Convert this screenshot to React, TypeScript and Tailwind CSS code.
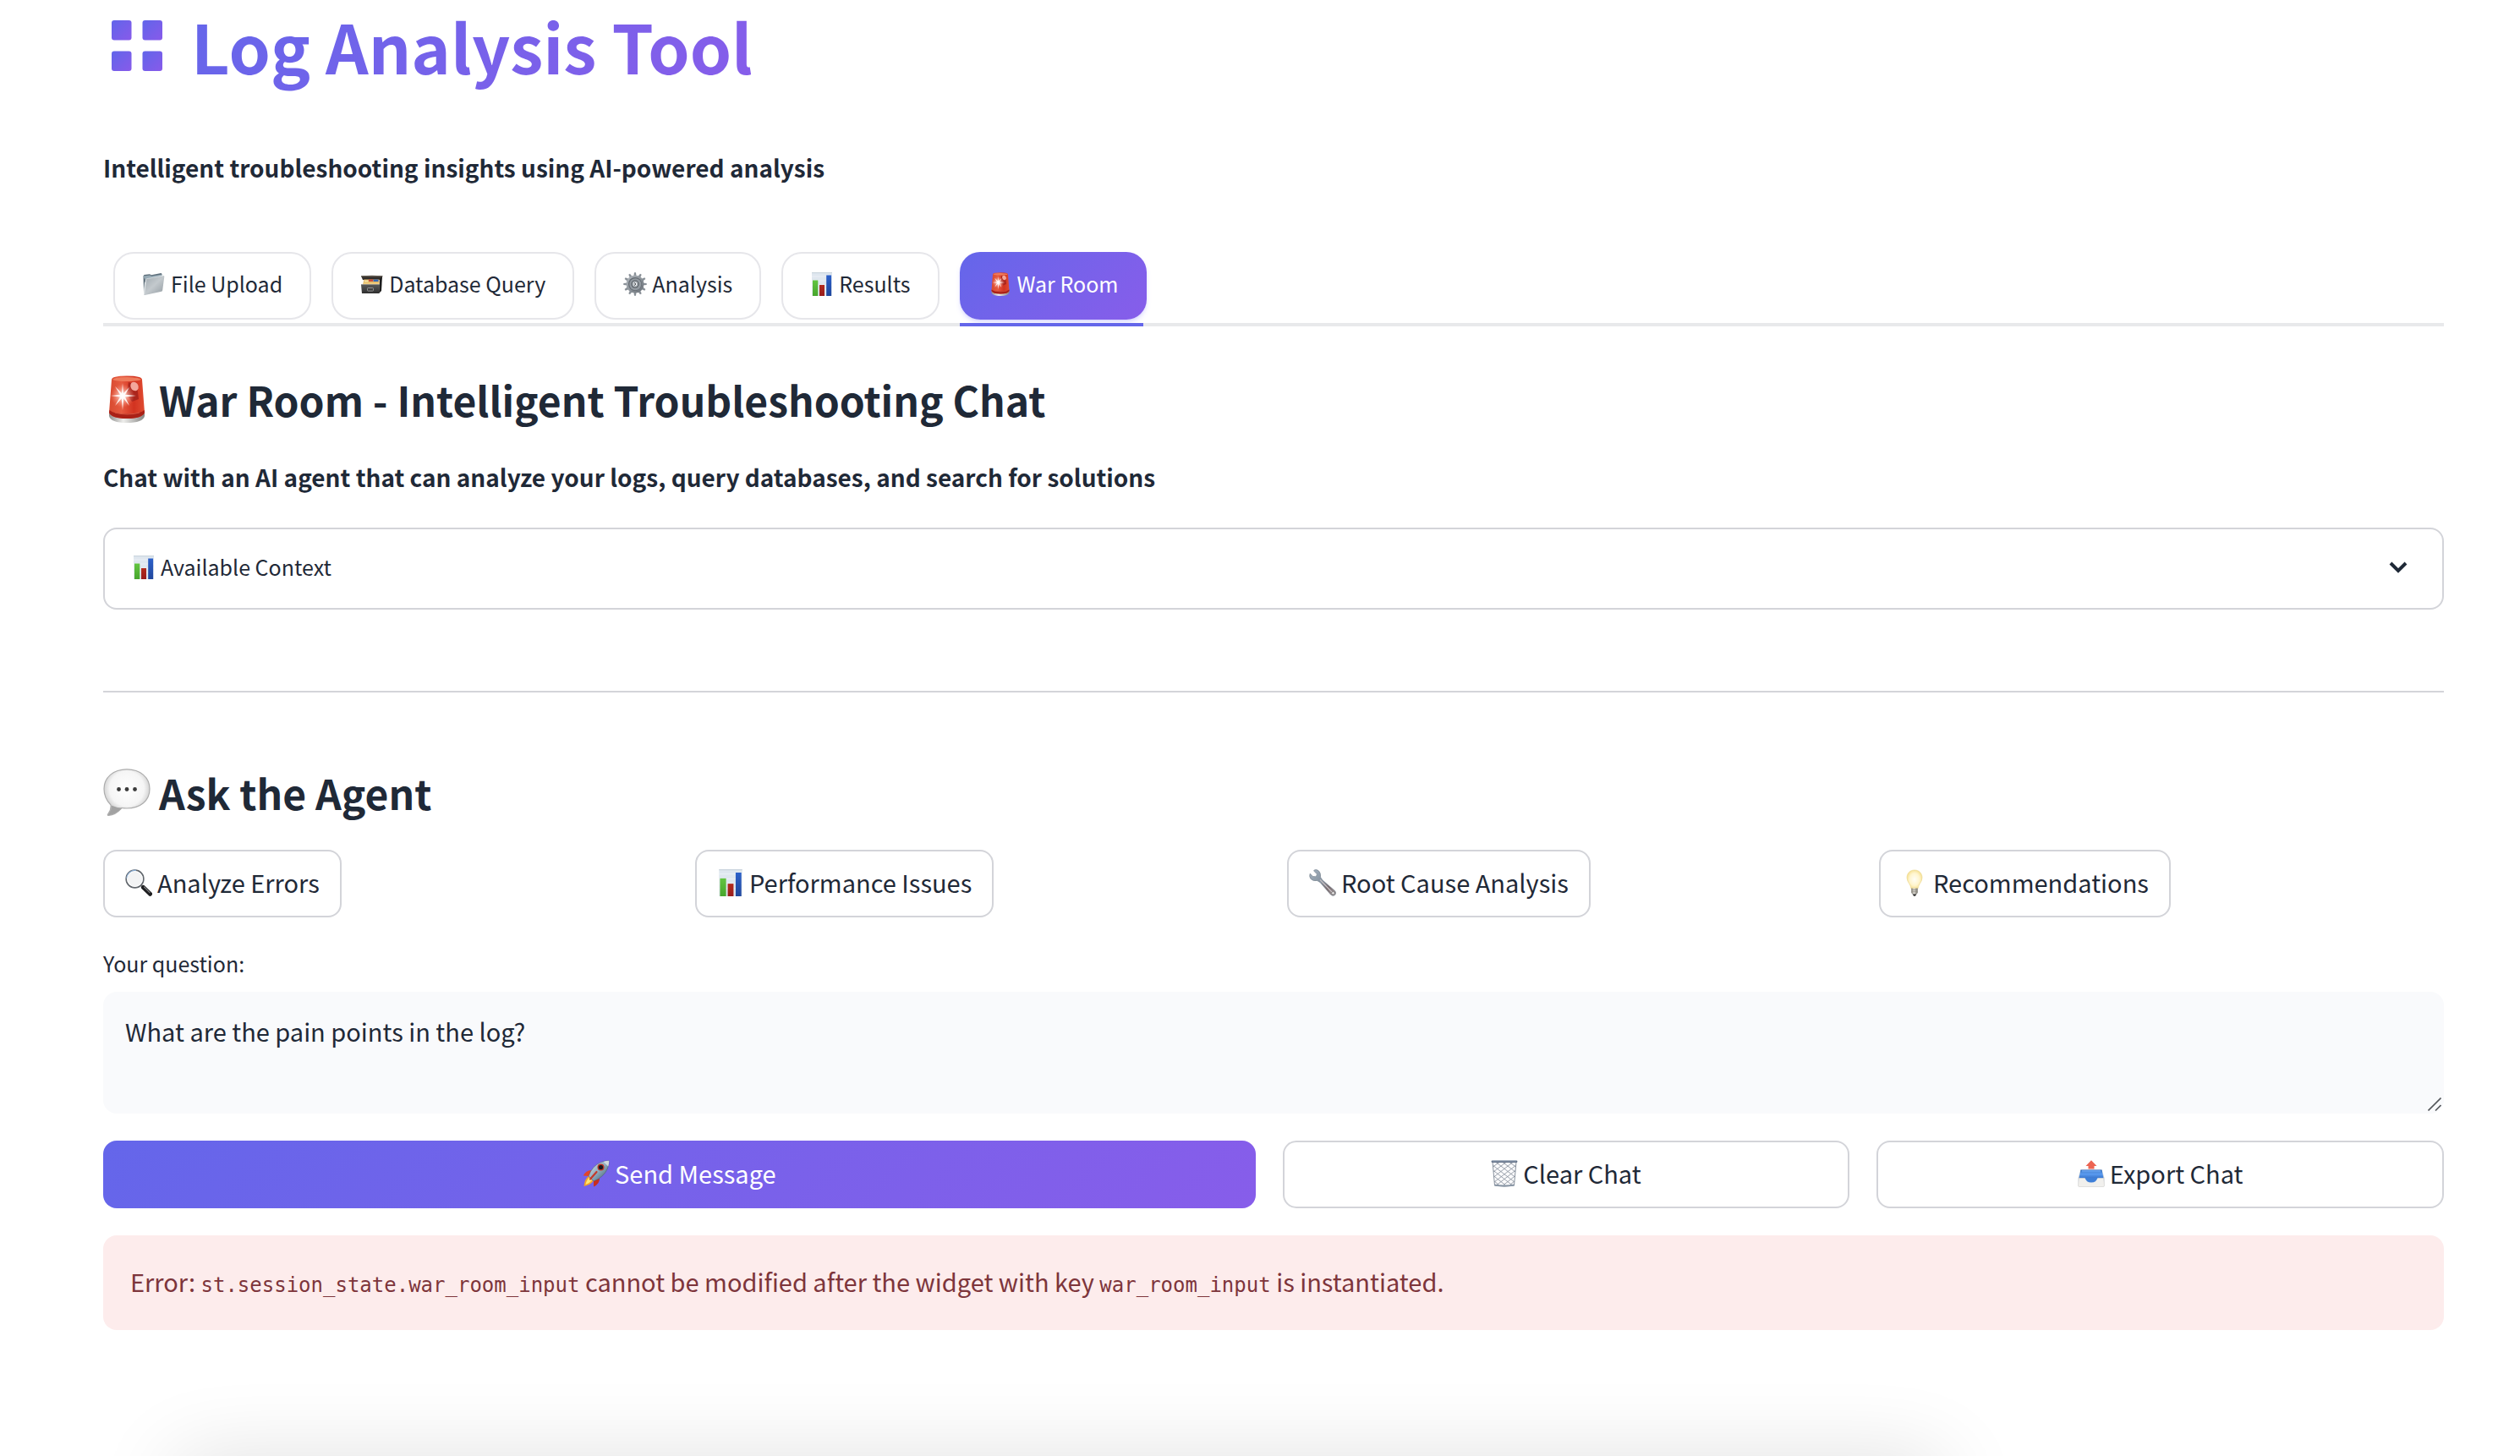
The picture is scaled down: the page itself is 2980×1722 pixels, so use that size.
import type { ReactNode } from "react";
import { useState } from "react";

type IconProps = { className?: string };

function GridLogo() {
  return (
    <svg viewBox="0 0 60 60" className="mx-2.5 size-[60px]" aria-hidden="true">
      <defs>
        <linearGradient id="logo-tile" x1="0" y1="0" x2="1" y2="1">
          <stop offset="0" stopColor="#6165ea" />
          <stop offset="1" stopColor="#885aea" />
        </linearGradient>
      </defs>
      <g fill="url(#logo-tile)">
        <rect x="0" y="0" width="23.5" height="23.5" rx="3" />
        <rect x="36.500" y="0" width="23.5" height="23.5" rx="3" />
        <rect x="0" y="36.500" width="23.5" height="23.5" rx="3" />
        <rect x="36.500" y="36.500" width="23.5" height="23.5" rx="3" />
      </g>
    </svg>
  );
}

function FolderIcon({ className }: IconProps) {
  return (
    <svg viewBox="0 0 28 28" className={className} aria-hidden="true">
      <defs>
        <linearGradient id="folder-front" x1="0" y1="0" x2="1" y2="1">
          <stop offset="0" stopColor="#9fa8ae" />
          <stop offset="0.5" stopColor="#c3c9cd" />
          <stop offset="1" stopColor="#929ba1" />
        </linearGradient>
      </defs>
      <path d="M1.500 4.500 L2.500 3 L9 2.200 L11 3.300 L22.500 1 L23.500 2 L23 6 L3 12 L2 24 Z" fill="#5b6c78" />
      <path d="M1.500 4.500 L9.500 3.600 L11 4.600 L23.500 2.500 L23 5 L3 8 Z" fill="#97aab5" />
      <path d="M4 9 Q4 8 5 7.800 L25 4 Q26.500 3.900 26.300 5.200 L24.200 21.200 Q24 22.400 23 22.800 L3.400 27 Q2 27.200 2.100 25.800 Z" fill="url(#folder-front)" />
      <path d="M4 9 Q4 8 5 7.800 L25 4" fill="none" stroke="#edf1f3" strokeWidth="0.6" />
      <path d="M2.600 26 L4.500 9" stroke="#e7ebed" strokeWidth="0.9" />
    </svg>
  );
}

function CardBoxIcon({ className }: IconProps) {
  return (
    <svg viewBox="0 0 28 28" className={className} aria-hidden="true">
      <defs>
        <linearGradient id="box-front" x1="0" y1="0" x2="0" y2="1">
          <stop offset="0" stopColor="#595959" />
          <stop offset="1" stopColor="#2f2f2f" />
        </linearGradient>
      </defs>
      <path d="M1 4.500 Q14 3.300 26.500 4.500 L24.500 9 L3 9 Z" fill="#302c29" />
      <path d="M1 4.300 Q14 3.200 26.500 4.300 L26 5.500 L1.500 5.500 Z" fill="#625b51" />
      <path d="M23 8 L26 5 L25 22 L22 25 Z" fill="#1c1c1c" />
      <path d="M4.500 8.500 H22.500 V15 H3 Z" fill="#e3b866" />
      <rect x="10" y="8.500" width="5" height="2.300" fill="#c8443a" />
      <rect x="15.500" y="8.500" width="6" height="2.500" fill="#3569b5" />
      <rect x="5" y="9.500" width="4.500" height="2" fill="#f5e2a6" />
      <path d="M4 12.500 H22.500 V15 H3 Z" fill="#f2cf82" />
      <path d="M1 14.500 H23 L22.300 25 H2 Z" fill="url(#box-front)" />
      <path d="M1 14.500 H23" stroke="#8b8b8b" strokeWidth="0.8" />
      <rect x="8.500" y="18.500" width="7" height="3.600" rx="0.800" fill="none" stroke="#9a9a9a" strokeWidth="0.9" />
    </svg>
  );
}

const gearAngles = [0, 30, 60, 90, 120, 150, 180, 210, 240, 270, 300, 330];

function GearIcon({ className }: IconProps) {
  return (
    <svg viewBox="0 0 28 28" className={className} aria-hidden="true">
      <defs>
        <linearGradient id="gear-body" x1="0" y1="0" x2="1" y2="1">
          <stop offset="0" stopColor="#b6bcc2" />
          <stop offset="1" stopColor="#676e75" />
        </linearGradient>
      </defs>
      <g fill="#899097">
        {gearAngles.map((angle) => (
          <path key={angle} d="M12.400 5 L13 0.300 H15 L15.600 5 Z" transform={`rotate(${angle} 14 14)`} />
        ))}
      </g>
      <circle cx="14" cy="14" r="10.500" fill="url(#gear-body)" />
      <circle cx="14" cy="14" r="8" fill="#646b72" />
      <circle cx="14.300" cy="14.300" r="7" fill="#9299a0" />
      <circle cx="14" cy="14" r="4.500" fill="#4e545a" />
      <circle cx="14" cy="14" r="3.400" fill="#b9bfc4" />
      <circle cx="14.300" cy="14" r="1.700" fill="#fff" />
      <path d="M13 12.500 L15 14 L13 15.500" stroke="#3e4348" strokeWidth="1" fill="none" />
    </svg>
  );
}

function ChartIcon({ className }: IconProps) {
  return (
    <svg viewBox="0 0 28 28" className={className} aria-hidden="true">
      <defs>
        <linearGradient id="bar-green" x1="0" y1="0" x2="0" y2="1">
          <stop offset="0" stopColor="#63c540" />
          <stop offset="1" stopColor="#47a52d" />
        </linearGradient>
        <linearGradient id="bar-red" x1="0" y1="0" x2="0" y2="1">
          <stop offset="0" stopColor="#b32b1d" />
          <stop offset="1" stopColor="#981d1d" />
        </linearGradient>
        <linearGradient id="bar-blue" x1="0" y1="0" x2="0" y2="1">
          <stop offset="0" stopColor="#2c60c9" />
          <stop offset="1" stopColor="#20479c" />
        </linearGradient>
      </defs>
      <rect x="2" y="0" width="24" height="28" fill="#dfe7ef" />
      <path d="M2 0.600 H26" stroke="#cbd5de" strokeWidth="1.200" />
      <path d="M2 5 H26 M2 10 H26 M2 15 H26 M2 20 H26" stroke="#edf2f7" strokeWidth="0.800" />
      <rect x="3" y="9.500" width="6.300" height="18.500" fill="url(#bar-green)" />
      <rect x="11" y="15" width="6" height="13" fill="url(#bar-red)" />
      <rect x="19.200" y="3.500" width="5.900" height="24.500" fill="url(#bar-blue)" />
    </svg>
  );
}

function SirenIcon({ className }: IconProps) {
  return (
    <svg viewBox="0 0 56 56" className={className} aria-hidden="true">
      <defs>
        <linearGradient id="siren-glass" x1="0" y1="0" x2="1" y2="0">
          <stop offset="0" stopColor="#d84a30" />
          <stop offset="0.35" stopColor="#e65a40" />
          <stop offset="0.7" stopColor="#d23320" />
          <stop offset="1" stopColor="#e04c32" />
        </linearGradient>
        <linearGradient id="siren-base" x1="0" y1="0" x2="1" y2="0">
          <stop offset="0" stopColor="#8f8f8d" />
          <stop offset="0.4" stopColor="#eeeeec" />
          <stop offset="1" stopColor="#878785" />
        </linearGradient>
        <radialGradient id="siren-glow">
          <stop offset="0" stopColor="#fff" stopOpacity="1" />
          <stop offset="0.3" stopColor="#ffe3da" stopOpacity="0.7" />
          <stop offset="1" stopColor="#ff9a84" stopOpacity="0" />
        </radialGradient>
      </defs>
      <path d="M7 44 V48 Q9 56 28 56 Q47 56 49 48 V44 Z" fill="url(#siren-base)" />
      <path d="M10 5 Q10 0.500 28 0.500 Q46 0.500 46 5 L49 44 Q46 51 28 51 Q10 51 7 44 Z" fill="url(#siren-glass)" />
      <path d="M7.500 41 Q12 45.500 28 45.500 Q44 45.500 48.700 41 L49 44 Q46 51 28 51 Q10 51 7 44 Z" fill="#a92117" />
      <path d="M11 5 Q13 2 28 2 Q43 2 45 5 Q40 7 28 7 Q16 7 11 5 Z" fill="#ee7b5c" />
      <path d="M30 8 L40 12 L42 28 L34 31 L28 22 Z" fill="#ab251c" />
      <ellipse cx="37" cy="13" rx="4.500" ry="5.500" fill="#f3a79b" transform="rotate(-25 37 13)" />
      <circle cx="23" cy="24" r="14" fill="url(#siren-glow)" />
      <path d="M23 9 L24 21 L31 14 L26 22.800 L39 24 L26 25.500 L31 36 L24.300 27.500 L23 41 L21.700 27.500 L14 36 L20 25.500 L9 24 L20 22.800 L14 13 L22 21 Z" fill="#fff" opacity="0.9" />
      <path d="M14 44 Q28 48 43 44" stroke="#d45540" strokeWidth="1.200" fill="none" />
    </svg>
  );
}

function BubbleIcon({ className }: IconProps) {
  return (
    <svg viewBox="0 0 56 56" className={className} aria-hidden="true">
      <defs>
        <radialGradient id="bubble-fill" cx="0.5" cy="0.42" r="0.58">
          <stop offset="0" stopColor="#ffffff" />
          <stop offset="0.65" stopColor="#f5f5f5" />
          <stop offset="0.9" stopColor="#cecece" />
          <stop offset="1" stopColor="#a5a5a5" />
        </radialGradient>
      </defs>
      <path
        d="M28 0.800 C44 0.800 55 10.500 55 24 C55 38 44 47 28 47 C26 47 24 46.900 22 46.500 C18 51 12 55 6.500 55.400 C5 55.500 5 54.500 6 53.500 C8.500 50.500 9.500 47.500 9 43 C4 38 1 32 1 24 C1 10.500 12 0.800 28 0.800 Z"
        fill="url(#bubble-fill)"
        stroke="#adadad"
        strokeWidth="1.200"
      />
      <path d="M9.500 43.500 Q15 46 22 46.500 Q15 54 6.500 55 Q10.500 50 9.500 43.500 Z" fill="#a2a2a2" />
      <g fill="#3b3b3b">
        <circle cx="18.500" cy="24.500" r="2.400" />
        <circle cx="28" cy="24.500" r="2.400" />
        <circle cx="37.500" cy="24.500" r="2.400" />
      </g>
    </svg>
  );
}

function MagnifierIcon({ className }: IconProps) {
  return (
    <svg viewBox="0 0 32 32" className={className} aria-hidden="true">
      <path d="M18.500 18.500 L22 22.500" stroke="#888" strokeWidth="2.500" />
      <path d="M21.500 21.500 L29.500 29.300" stroke="#1d1d1f" strokeWidth="5" strokeLinecap="round" />
      <path d="M22.500 21 L29 27.500" stroke="#77797c" strokeWidth="1.200" strokeLinecap="round" />
      <circle cx="11.500" cy="11.500" r="10.300" fill="#f2f3f4" stroke="#62676d" strokeWidth="1.700" />
      <path d="M2 11 A10 10 0 0 1 13 1.300" fill="none" stroke="#87a9cf" strokeWidth="1.300" />
      <circle cx="11.500" cy="11.500" r="9" fill="none" stroke="#fff" strokeWidth="0.900" />
    </svg>
  );
}

function WrenchIcon({ className }: IconProps) {
  return (
    <svg viewBox="0 0 32 32" className={className} aria-hidden="true">
      <defs>
        <linearGradient id="wrench-metal" x1="0" y1="0" x2="1" y2="1">
          <stop offset="0" stopColor="#a5b3c0" />
          <stop offset="0.45" stopColor="#8592a0" />
          <stop offset="0.7" stopColor="#75666a" />
          <stop offset="1" stopColor="#aaa5a5" />
        </linearGradient>
      </defs>
      <path
        d="M6.500 0.800 L5.500 1.800 L9.300 5.800 Q9.500 8 7.500 8.700 L4.500 8.500 L1.200 5.200 Q-0.200 8.500 2 11.500 Q5 14.500 9.500 13.500 L13 15.500 L25.500 30 Q28 32.600 30.700 30.500 Q33 28 30.500 25.500 L16 13 L13.600 9.500 Q14.300 4.500 11.500 2 Q9.300 0 6.500 0.800 Z"
        fill="url(#wrench-metal)"
        stroke="#737f8b"
        strokeWidth="0.600"
      />
      <path d="M13 12.500 L27 27" stroke="#c6c1c4" strokeWidth="1.200" />
      <circle cx="28.400" cy="28.200" r="1.600" fill="#fff" stroke="#696464" strokeWidth="0.700" />
    </svg>
  );
}

function BulbIcon({ className }: IconProps) {
  return (
    <svg viewBox="0 0 32 32" className={className} aria-hidden="true">
      <defs>
        <radialGradient id="bulb-glass" cx="0.5" cy="0.5" r="0.6">
          <stop offset="0" stopColor="#fffef5" />
          <stop offset="0.55" stopColor="#fff5ce" />
          <stop offset="1" stopColor="#f2d777" />
        </radialGradient>
        <linearGradient id="bulb-cap" x1="0" y1="0" x2="1" y2="0">
          <stop offset="0" stopColor="#77746c" />
          <stop offset="0.4" stopColor="#e2e0d9" />
          <stop offset="1" stopColor="#77746c" />
        </linearGradient>
      </defs>
      <path d="M16 1 C21.500 1 25 5 25 10 C25 15.500 20.500 17.500 20 23 H12 C11.500 17.500 7 15.500 7 10 C7 5 10.500 1 16 1 Z" fill="url(#bulb-glass)" stroke="#ead58c" strokeWidth="0.600" />
      <path d="M12.300 22.500 H19.700 V28 L18 30 H14 L12.300 28 Z" fill="url(#bulb-cap)" />
      <path d="M12.300 24.500 H19.700 M12.300 26.700 H19.700" stroke="#89867c" strokeWidth="0.700" />
      <path d="M13.700 29.500 H18.300 L17 31.700 H15 Z" fill="#303030" />
    </svg>
  );
}

function RocketIcon({ className }: IconProps) {
  return (
    <svg viewBox="0 0 32 32" className={className} aria-hidden="true">
      <defs>
        <linearGradient id="rocket-hull" x1="0" y1="0" x2="1" y2="1">
          <stop offset="0" stopColor="#e0ebf0" />
          <stop offset="0.5" stopColor="#8eabbd" />
          <stop offset="1" stopColor="#34505f" />
        </linearGradient>
      </defs>
      <path d="M11 12 Q4 11.500 0.800 18.500 L7.500 19 Z" fill="#e2442a" />
      <path d="M20 21 Q20.500 28 13 31.500 L13 24.500 Z" fill="#c82e20" />
      <path d="M7 19 Q2.500 22 1.500 31 Q9 29.500 12.500 25 Z" fill="#f3a32b" />
      <path d="M8 20.500 Q4.500 23.500 3.500 29 Q8 27.500 11 24 Z" fill="#ffe872" />
      <path d="M31.300 0.700 Q20 1 13 8.500 Q9 13 7 19 L13 25 Q19 23 23.500 18.500 Q31 11.500 31.300 0.700 Z" fill="url(#rocket-hull)" stroke="#465b68" strokeWidth="0.500" />
      <path d="M31.300 0.700 Q27.500 0.800 24.500 2 L30.300 7.500 Q31.200 4.500 31.300 0.700 Z" fill="#d2d9dd" />
      <circle cx="21.500" cy="8.500" r="4" fill="#b93627" />
      <circle cx="21.500" cy="8.500" r="2.600" fill="#171b22" />
      <path d="M16.500 14 L9 22.500" stroke="#c43a2a" strokeWidth="2.200" strokeLinecap="round" />
    </svg>
  );
}

function TrashIcon({ className }: IconProps) {
  return (
    <svg viewBox="0 0 32 32" className={className} aria-hidden="true">
      <path d="M2 2 L4.500 30 Q16 32 27.500 30 L30 2 Z" fill="#fbfbfc" stroke="#8a939f" strokeWidth="1" />
      <path
        d="M2.500 8 L10 2.500 M3 14 L18 2.500 M3.500 20 L26 2.500 M4 26 L29.300 6.500 M7 29.500 L28.800 12.500 M15 29.500 L28.300 19 M22.500 29.500 L27.800 25 M29.500 8 L22 2.500 M29 14 L14 2.500 M28.500 20 L6 2.500 M28 26 L2.700 6.500 M25 29.500 L3.200 12.500 M17 29.500 L3.700 19 M9.500 29.500 L4.200 25"
        stroke="#848d99"
        strokeWidth="0.800"
        fill="none"
      />
      <path d="M4 28.600 Q16 30.400 28 28.600 L27.700 30.500 Q16 32.500 4.300 30.500 Z" fill="#8996a5" />
      <rect x="0.600" y="0.400" width="30.800" height="2.500" rx="1.200" fill="#637288" />
      <path d="M2 1.100 H30" stroke="#a4b2c4" strokeWidth="0.700" />
    </svg>
  );
}

function OutboxIcon({ className }: IconProps) {
  return (
    <svg viewBox="0 0 32 32" className={className} aria-hidden="true">
      <defs>
        <linearGradient id="tray-inner" x1="0" y1="0" x2="0" y2="1">
          <stop offset="0" stopColor="#2d68b8" />
          <stop offset="0.5" stopColor="#5a9bf0" />
          <stop offset="1" stopColor="#3975cc" />
        </linearGradient>
      </defs>
      <path d="M3.500 11.500 H28.500 L31.500 21 V30 Q31.500 31.500 30 31.500 H2 Q0.500 31.500 0.500 30 V21 Z" fill="#cbd0d5" />
      <path d="M3.500 11.500 H28.500 L30.500 21.500 H1.500 Z" fill="url(#tray-inner)" />
      <path d="M5 12 H27 L27.500 14.500 H4.500 Z" fill="#5f9bea" />
      <path d="M1.500 21.500 H30.500 L31.500 30 Q31.500 31.500 30 31.500 H2 Q0.500 31.500 0.500 30 Z" fill="#f1f0ed" stroke="#d8d8d5" strokeWidth="0.600" />
      <path d="M8.500 21 Q10 26.500 16 26.500 Q22 26.500 23.500 21 Z" fill="#3e7fd8" />
      <path d="M16 0.300 L22.500 7 H19.500 V10.500 H12.500 V7 H9.500 Z" fill="#ec6553" />
    </svg>
  );
}

const tabs = [
  { label: "File Upload", Icon: FolderIcon },
  { label: "Database Query", Icon: CardBoxIcon },
  { label: "Analysis", Icon: GearIcon },
  { label: "Results", Icon: ChartIcon },
  { label: "War Room", Icon: SirenIcon },
];

const prompts = [
  { label: "Analyze Errors", Icon: MagnifierIcon },
  { label: "Performance Issues", Icon: ChartIcon },
  { label: "Root Cause Analysis", Icon: WrenchIcon },
  { label: "Recommendations", Icon: BulbIcon },
];

function OutlineButton({ children, className = "" }: { children: ReactNode; className?: string }) {
  return (
    <button
      type="button"
      className={`flex h-20 items-center justify-center gap-1.5 rounded-2xl border-2 border-[#d3d4d9] bg-white px-6 pb-0.5 text-[29px] whitespace-nowrap ${className}`}
    >
      {children}
    </button>
  );
}

function Code({ children }: { children: ReactNode }) {
  return <code className="font-['DejaVu_Sans_Mono',monospace] text-[24px] leading-none">{children}</code>;
}

export default function App() {
  const [active, setActive] = useState("War Room");
  const [open, setOpen] = useState(false);
  const [question, setQuestion] = useState("What are the pain points in the log?");

  return (
    <div className="relative min-h-screen overflow-hidden bg-white font-['Noto_Sans_CJK_SC','Noto_Sans',sans-serif] text-[#1f2937]">
      <main className="flex flex-col pr-[90px] pb-32 pl-[122px]">
        <h1 className="flex items-center gap-6 text-[79px] leading-27 font-bold">
          <GridLogo />
          <span className="bg-linear-135 from-[#6466ea] to-[#875dea] bg-clip-text text-transparent">Log Analysis Tool</span>
        </h1>
        <p className="mt-[66px] text-[28px] leading-12 font-bold">
          Intelligent troubleshooting insights using AI-powered analysis
        </p>

        <div role="tablist" className="mt-[76px] flex gap-6 border-b-4 border-[#e8e9eb] px-3">
          {tabs.map(({ label, Icon }) => {
            const selected = label === active;
            return (
              <div key={label} className="relative pb-1">
                <button
                  type="button"
                  role="tab"
                  aria-selected={selected}
                  onClick={() => setActive(label)}
                  className={`flex h-20 items-center gap-1.5 rounded-3xl border-2 px-8 pb-1 text-[25px] whitespace-nowrap ${
                    selected
                      ? "border-transparent bg-linear-135 from-[#6466ea] to-[#875dea] bg-origin-border text-white shadow-md shadow-indigo-500/20"
                      : "border-[#e6e6ea] bg-white"
                  }`}
                >
                  <Icon className="size-7 shrink-0" />
                  {label}
                </button>
                {selected && <span className="absolute top-full right-1 left-0 h-1 bg-[#6466ea]" />}
              </div>
            );
          })}
        </div>

        <h2 className="mt-[54px] flex items-center gap-2.5 text-[48px] leading-16 font-bold">
          <SirenIcon className="size-14 shrink-0" />
          War Room - Intelligent Troubleshooting Chat
        </h2>
        <p className="mt-9 text-[28px] leading-12 font-bold">
          Chat with an AI agent that can analyze your logs, query databases, and search for solutions
        </p>

        <button
          type="button"
          aria-expanded={open}
          onClick={() => setOpen(!open)}
          className="mt-9 flex h-[97px] items-center gap-1.5 rounded-2xl border-2 border-[#d3d4d9] bg-white px-8 pb-1 text-[25px]"
        >
          <ChartIcon className="size-7 shrink-0" />
          Available Context
          <svg viewBox="0 0 40 40" className="ml-auto size-10" aria-hidden="true">
            <path d="M11 15 L20 24 L29 15" fill="none" stroke="#1f2937" strokeWidth="4" />
          </svg>
        </button>

        <hr className="mt-24 border-t-2 border-[#d3d4d9]" />

        <h2 className="mt-[86px] flex items-center gap-2.5 text-[48px] leading-16 font-bold">
          <BubbleIcon className="size-14 shrink-0" />
          Ask the Agent
        </h2>

        <div className="mt-9 grid grid-cols-4 gap-8">
          {prompts.map(({ label, Icon }) => (
            <OutlineButton key={label} className="justify-self-start">
              <Icon className="size-8 shrink-0" />
              {label}
            </OutlineButton>
          ))}
        </div>

        <label htmlFor="question" className="mt-[34px] text-[25px] leading-10">
          Your question:
        </label>
        <div className="relative mt-3.5 flex">
          <textarea
            id="question"
            value={question}
            onChange={(event) => setQuestion(event.target.value)}
            className="h-36 w-full resize-none rounded-2xl bg-[#f9fafc] px-[26px] py-[22px] text-[29px] leading-12 outline-none"
          />
          <svg viewBox="0 0 16 16" className="absolute right-[3px] bottom-[3px] size-4" aria-hidden="true">
            <path d="M0.500 15.500 L15.500 0.500 M9 15.500 L15.500 9" stroke="#55585c" strokeWidth="1.600" />
          </svg>
        </div>

        <div className="mt-8 flex gap-8">
          <button
            type="button"
            className="flex h-20 grow basis-[calc(50%-2rem)] items-center justify-center gap-1.5 rounded-2xl bg-linear-135 from-[#6466ea] to-[#875dea] pb-0.5 text-[29px] text-white"
          >
            <RocketIcon className="size-8 shrink-0" />
            Send Message
          </button>
          <OutlineButton className="grow basis-[calc(25%-2rem)]">
            <TrashIcon className="size-8 shrink-0" />
            Clear Chat
          </OutlineButton>
          <OutlineButton className="grow basis-[calc(25%-2rem)]">
            <OutboxIcon className="size-8 shrink-0" />
            Export Chat
          </OutlineButton>
        </div>

        <div role="alert" className="mt-8 rounded-2xl bg-[#fdecec] px-8 pt-[30px] pb-[34px] text-[29px] leading-12 text-[#7d353b]">
          Error: <Code>st.session_state.war_room_input</Code> cannot be modified after the widget with key{" "}
          <Code>war_room_input</Code> is instantiated.
        </div>
      </main>
      <div className="absolute top-full right-[23%] left-[7%] h-20 shadow-[0_6px_100px_rgba(0,0,0,0.14)]" />
    </div>
  );
}
